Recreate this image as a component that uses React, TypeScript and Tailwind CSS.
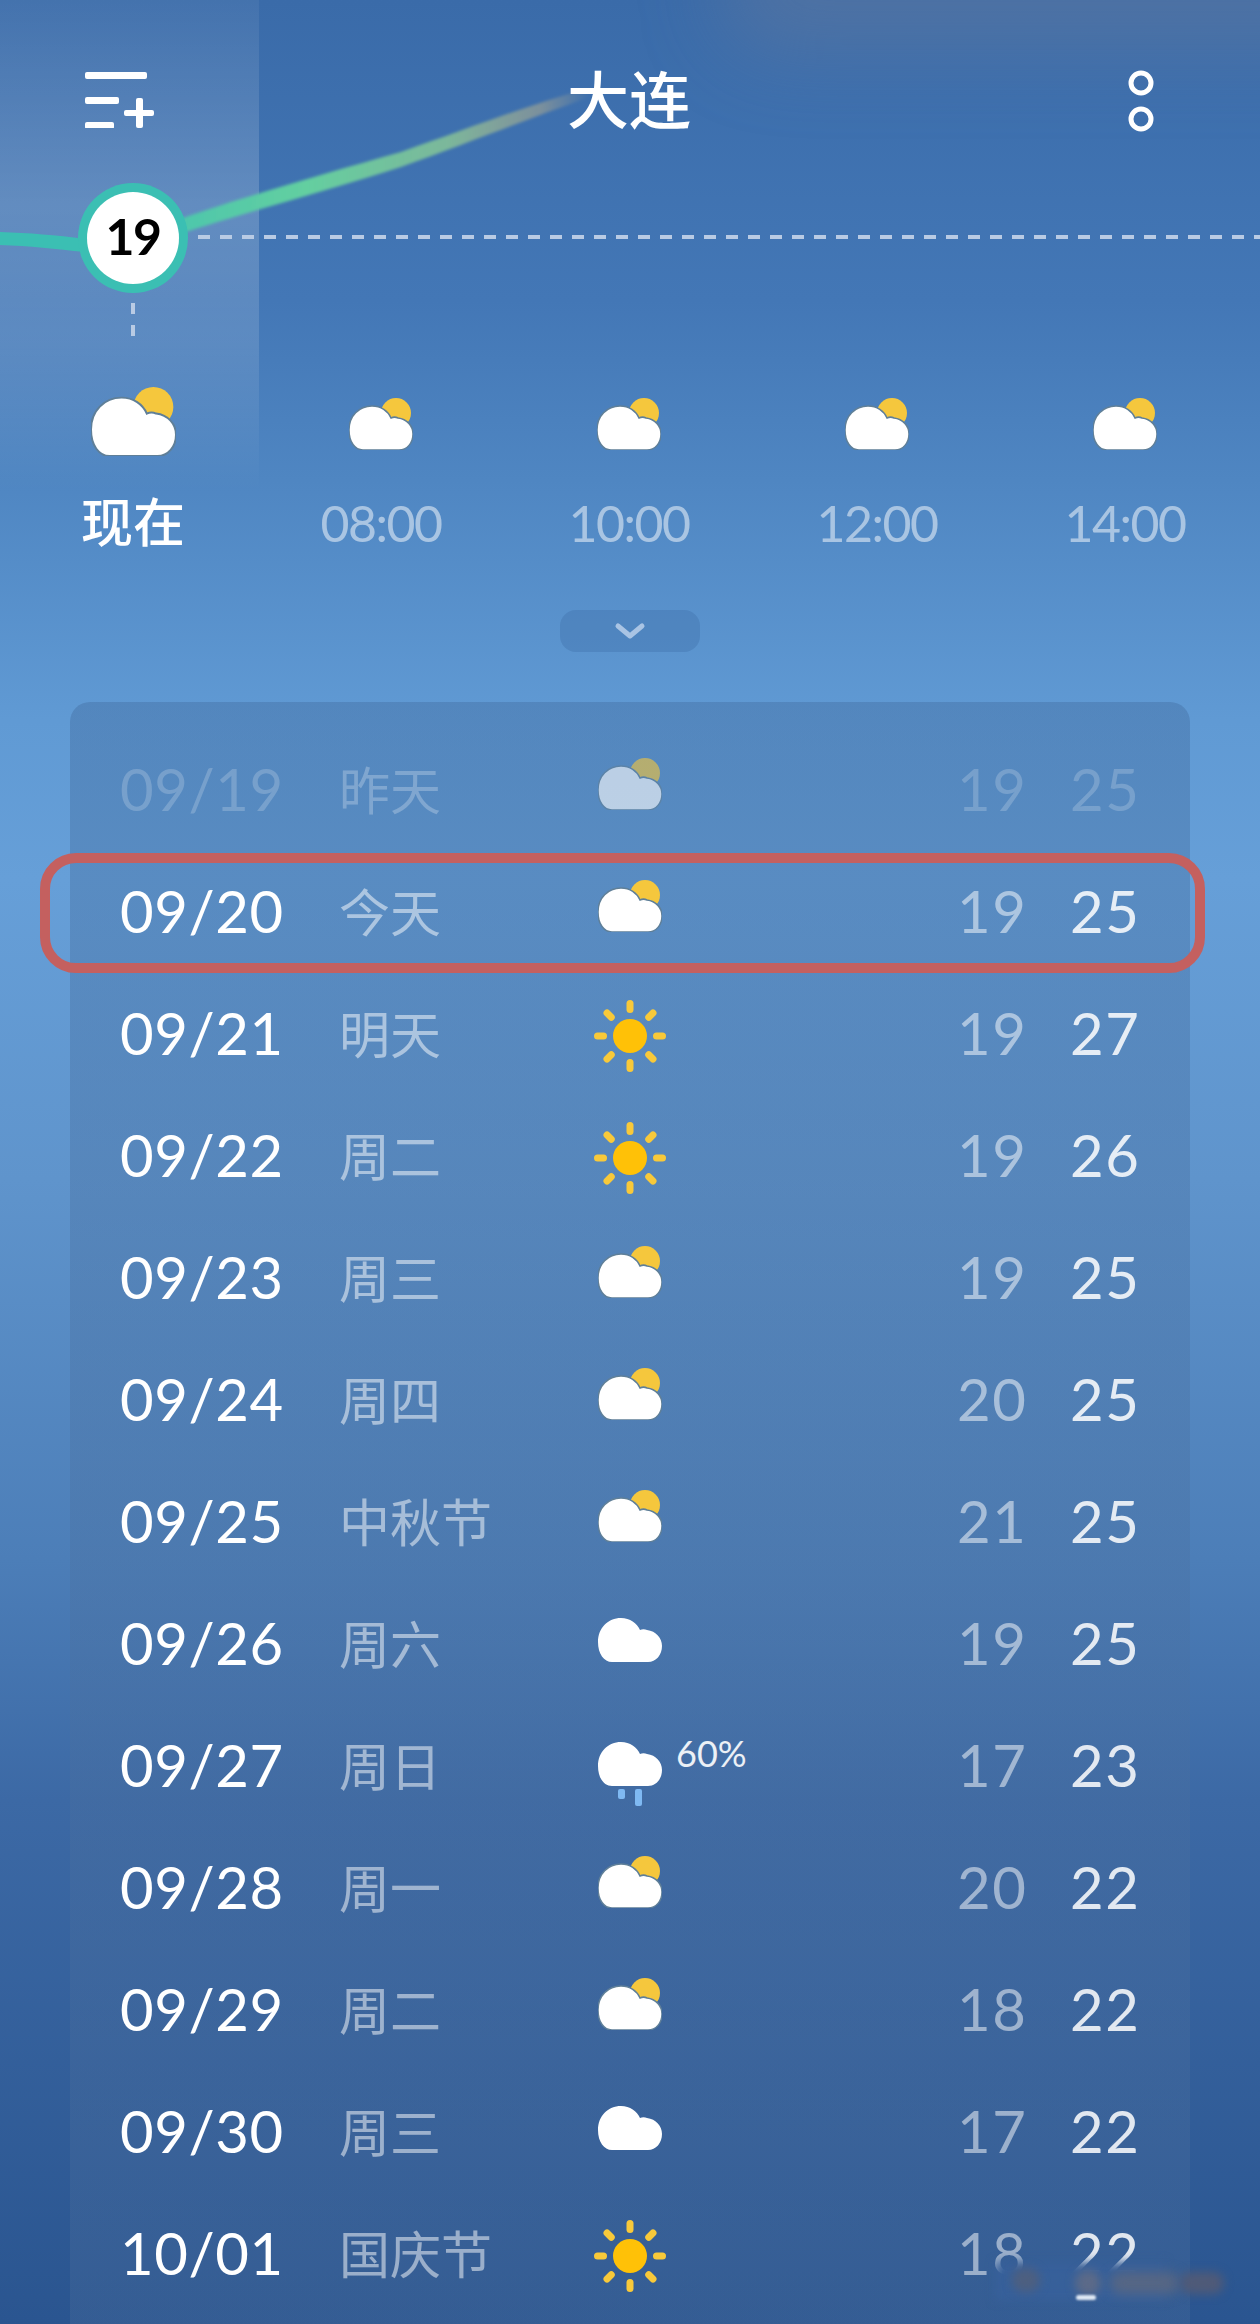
import React from 'react';

type Weather = 'partly' | 'sun' | 'cloud' | 'rain';

interface Day {
  date: string;
  name: string;
  weather: Weather;
  low: number;
  high: number;
  chance?: string;
}

const days: Day[] = [
  { date: '09/20', name: '今天', weather: 'partly', low: 19, high: 25 },
  { date: '09/21', name: '明天', weather: 'sun', low: 19, high: 27 },
  { date: '09/22', name: '周二', weather: 'sun', low: 19, high: 26 },
  { date: '09/23', name: '周三', weather: 'partly', low: 19, high: 25 },
  { date: '09/24', name: '周四', weather: 'partly', low: 20, high: 25 },
  { date: '09/25', name: '中秋节', weather: 'partly', low: 21, high: 25 },
  { date: '09/26', name: '周六', weather: 'cloud', low: 19, high: 25 },
  { date: '09/27', name: '周日', weather: 'rain', low: 17, high: 23, chance: '60%' },
  { date: '09/28', name: '周一', weather: 'partly', low: 20, high: 22 },
  { date: '09/29', name: '周二', weather: 'partly', low: 18, high: 22 },
  { date: '09/30', name: '周三', weather: 'cloud', low: 17, high: 22 },
  { date: '10/01', name: '国庆节', weather: 'sun', low: 18, high: 22 },
];

const hours = ['08:00', '10:00', '12:00', '14:00'];

const CLOUD_PATH = 'M14 44C6 44 0 36 0 24C0 10 10 0 23 0C32 0 39 5 42 12C44 11 47 11 49 12C58 13 64 20 64 28C64 37 58 44 50 44Z';

const PartlyCloudy = ({ width = 64 }: { width?: number }) => (
  <svg width={width} height={(width * 52) / 64} viewBox="0 0 64 52">
    <circle cx="47" cy="15" r="15" fill="#f5c73d" />
    <path d={CLOUD_PATH} transform="translate(0 8)" fill="#fff" stroke="#5f7f98" strokeWidth="1.5" />
  </svg>
);

const Sun = () => (
  <svg width="74" height="74" viewBox="-37 -37 74 74">
    <circle r="17" fill="#ffc107" />
    {[0, 45, 90, 135, 180, 225, 270, 315].map((a) => (
      <rect key={a} x="-3.5" y="-36" width="7" height="13" rx="3.5" fill="#f8c93a" transform={`rotate(${a})`} />
    ))}
  </svg>
);

const Cloud = () => (
  <svg width="64" height="44" viewBox="0 0 64 44">
    <path d={CLOUD_PATH} fill="#fff" />
  </svg>
);

const Rain = () => (
  <svg width="64" height="64" viewBox="0 0 64 64">
    <path d={CLOUD_PATH} fill="#fff" />
    <rect x="20" y="47" width="7" height="10" rx="2" fill="#7fb9f2" />
    <rect x="37" y="47" width="7" height="17" rx="2" fill="#7fb9f2" />
  </svg>
);

const WeatherIcon = ({ weather }: { weather: Weather }) => {
  if (weather === 'sun') return <div className="mt-[4px]"><Sun /></div>;
  if (weather === 'cloud') return <div className="mb-[8px]"><Cloud /></div>;
  if (weather === 'rain') return <div className="mt-[16px]"><Rain /></div>;
  return <div className="mb-[12px]"><PartlyCloudy /></div>;
};

const Row = ({ day, faded }: { day: Day; faded?: boolean }) => (
  <div className="flex h-[122px] items-center pl-[50px]">
    <div className={`mb-[3px] w-[219px] text-[58px] tracking-[0.6px] ${faded ? 'text-white/20' : 'text-white'}`}>{day.date}</div>
    <div className={`mb-[4px] w-[231px] font-['Noto_Sans_CJK_SC'] text-[51px] ${faded ? 'text-white/25' : 'text-white/50'}`}>{day.name}</div>
    <div className={`flex w-[120px] justify-center ${faded ? 'opacity-60' : ''}`}>
      <WeatherIcon weather={day.weather} />
    </div>
    <div className="w-[267px] pb-[26px] text-[36px] text-white/90">
      <span className="ml-[-14px]">{day.chance}</span>
    </div>
    <div className={`mb-[3px] w-[113px] text-[58px] tracking-[1.5px] ${faded ? 'text-white/20' : 'text-white/50'}`}>{day.low}</div>
    <div className={`mb-[3px] text-[58px] tracking-[1.5px] ${faded ? 'text-white/20' : 'text-white/85'}`}>{day.high}</div>
  </div>
);

export default function App() {
  return (
    <div className="relative h-[2324px] w-[1260px] overflow-hidden bg-[linear-gradient(180deg,#3a6ba9_0px,#4377b6_300px,#4f86c2_480px,#609ad4_720px,#669fd8_880px,#5f94cc_1180px,#4c7eb8_1560px,#3c69a5_1800px,#2a5590_2324px)] font-['Lato','Noto_Sans_CJK_SC',sans-serif]">
      {/* glow behind the current hour */}
      <div className="absolute left-0 top-0 h-[490px] w-[259px] bg-[linear-gradient(180deg,rgba(255,255,255,0.05)_0%,rgba(255,255,255,0.18)_42%,rgba(255,255,255,0.12)_70%,rgba(255,255,255,0)_100%)]" />
      <div className="absolute left-[720px] top-[-70px] h-[120px] w-[680px] rounded-full bg-[#6f7d9a]/40 blur-[40px]" />

      {/* temperature line */}
      <svg className="absolute left-0 top-0" width="1260" height="340" viewBox="0 0 1260 340">
        <defs>
          <linearGradient id="trend" x1="185" y1="0" x2="590" y2="0" gradientUnits="userSpaceOnUse">
            <stop offset="0" stopColor="#4ec7ab" />
            <stop offset="0.3" stopColor="#63cfa0" />
            <stop offset="0.65" stopColor="#86c497" stopOpacity="0.85" />
            <stop offset="0.88" stopColor="#b8b08c" stopOpacity="0.5" />
            <stop offset="1" stopColor="#b8b08c" stopOpacity="0" />
          </linearGradient>
          <filter id="soft" x="-5%" y="-20%" width="110%" height="140%">
            <feGaussianBlur stdDeviation="1.6" />
          </filter>
        </defs>
        <line x1="198" y1="237" x2="1260" y2="237" stroke="#b9cbe4" strokeWidth="4" strokeDasharray="12 10" />
        <line x1="133" y1="303" x2="133" y2="336" stroke="#b9cbe4" strokeWidth="4" strokeDasharray="11 11" />
        <path d="M180 219C240 198 330 172 401 152C470 128 530 104 590 88L590 97C530 118 470 142 401 167C330 190 240 214 180 234Z" fill="url(#trend)" filter="url(#soft)" />
        <path d="M0 232C30 233 55 235 85 239L85 252C55 249 30 246 0 245Z" fill="#3bbfb3" />
        <circle cx="133" cy="238" r="55" fill="#3bbfb3" />
        <circle cx="133" cy="238" r="46" fill="#fff" />
      </svg>
      <div className="absolute left-[87px] top-[190px] flex h-[92px] w-[92px] items-center justify-center text-[50px] font-bold tracking-[-1.5px] text-black">19</div>

      <header className="relative flex h-[380px] items-start pl-[85px] pt-[72px]">
        <svg width="70" height="56" viewBox="0 0 70 56" fill="#fff">
          <rect x="0" y="0" width="62" height="7" rx="2" />
          <rect x="0" y="25" width="34" height="7" rx="2" />
          <rect x="0" y="50" width="29" height="7" rx="2" />
          <rect x="39" y="38" width="30" height="6" rx="2" />
          <rect x="51" y="26" width="7" height="30" rx="2" />
        </svg>
        <h1 className="ml-[-1px] mt-[-13px] w-[950px] text-center font-['Noto_Sans_CJK_SC'] text-[62px] font-medium leading-[76px] text-white">大连</h1>
        <svg className="ml-[23px] mt-[-3px]" width="28" height="74" viewBox="0 0 28 74" fill="none" stroke="#fff" strokeWidth="5">
          <circle cx="14" cy="14" r="10" />
          <circle cx="14" cy="50" r="10" />
        </svg>
      </header>

      <section className="relative flex pl-[9px]">
        <div className="flex w-[248px] flex-col items-center">
          <div className="flex h-[76px] items-end">
            <PartlyCloudy width={85} />
          </div>
          <div className="mt-[34px] h-[63px] font-['Noto_Sans_CJK_SC'] text-[52px] font-medium leading-[60px] text-white">现在</div>
        </div>
        {hours.map((h) => (
          <div key={h} className="flex w-[248px] flex-col items-center">
            <div className="flex h-[76px] items-end pb-[6px]">
              <PartlyCloudy />
            </div>
            <div className="mt-[37px] text-[50px] leading-[60px] tracking-[-1.5px] text-white/50">{h}</div>
          </div>
        ))}
      </section>

      <div className="relative mx-auto mt-[57px] flex h-[42px] w-[140px] items-center justify-center rounded-[16px] bg-[#3c6ca6]/35">
        <svg width="32" height="18" viewBox="0 0 32 18" fill="none" stroke="#a9c4e4" strokeWidth="5" strokeLinecap="round" strokeLinejoin="round">
          <path d="M4 4L16 14L28 4" />
        </svg>
      </div>

      <main className="relative mx-[70px] mt-[50px] h-[1640px] rounded-[20px] bg-[linear-gradient(180deg,rgba(60,100,150,0.35)_0%,rgba(75,110,155,0.3)_50%,rgba(90,120,160,0.22)_100%)] pt-[27px]">
        <Row day={{ date: '09/19', name: '昨天', weather: 'partly', low: 19, high: 25 }} faded />
        {days.map((d) => (
          <Row key={d.date} day={d} />
        ))}
      </main>

      {/* highlight box drawn on top of the screenshot */}
      <div className="absolute left-[40px] top-[853px] h-[120px] w-[1165px] rounded-[36px] border-[10px] border-[#c4605f]" />

      {/* smudged watermark */}
      <div className="absolute left-[995px] top-[2262px] h-[38px] w-[170px] bg-[#37609a] blur-[5px]" />
      <div className="absolute left-[1012px] top-[2268px] h-[24px] w-[28px] rounded-full bg-[#4d5f80] blur-[5px]" />
      <div className="absolute left-[1075px] top-[2270px] h-[26px] w-[26px] rounded-full bg-[#5c6a88] blur-[5px]" />
      <div className="absolute left-[1110px] top-[2272px] h-[22px] w-[70px] rounded-full bg-[#566684] blur-[6px]" />
      <div className="absolute left-[1180px] top-[2272px] h-[22px] w-[44px] rounded-full bg-[#4f5a78] blur-[5px]" />
      <div className="absolute left-[1076px] top-[2295px] h-[5px] w-[20px] rounded-full bg-[#dfe8f4] blur-[1px]" />
    </div>
  );
}
